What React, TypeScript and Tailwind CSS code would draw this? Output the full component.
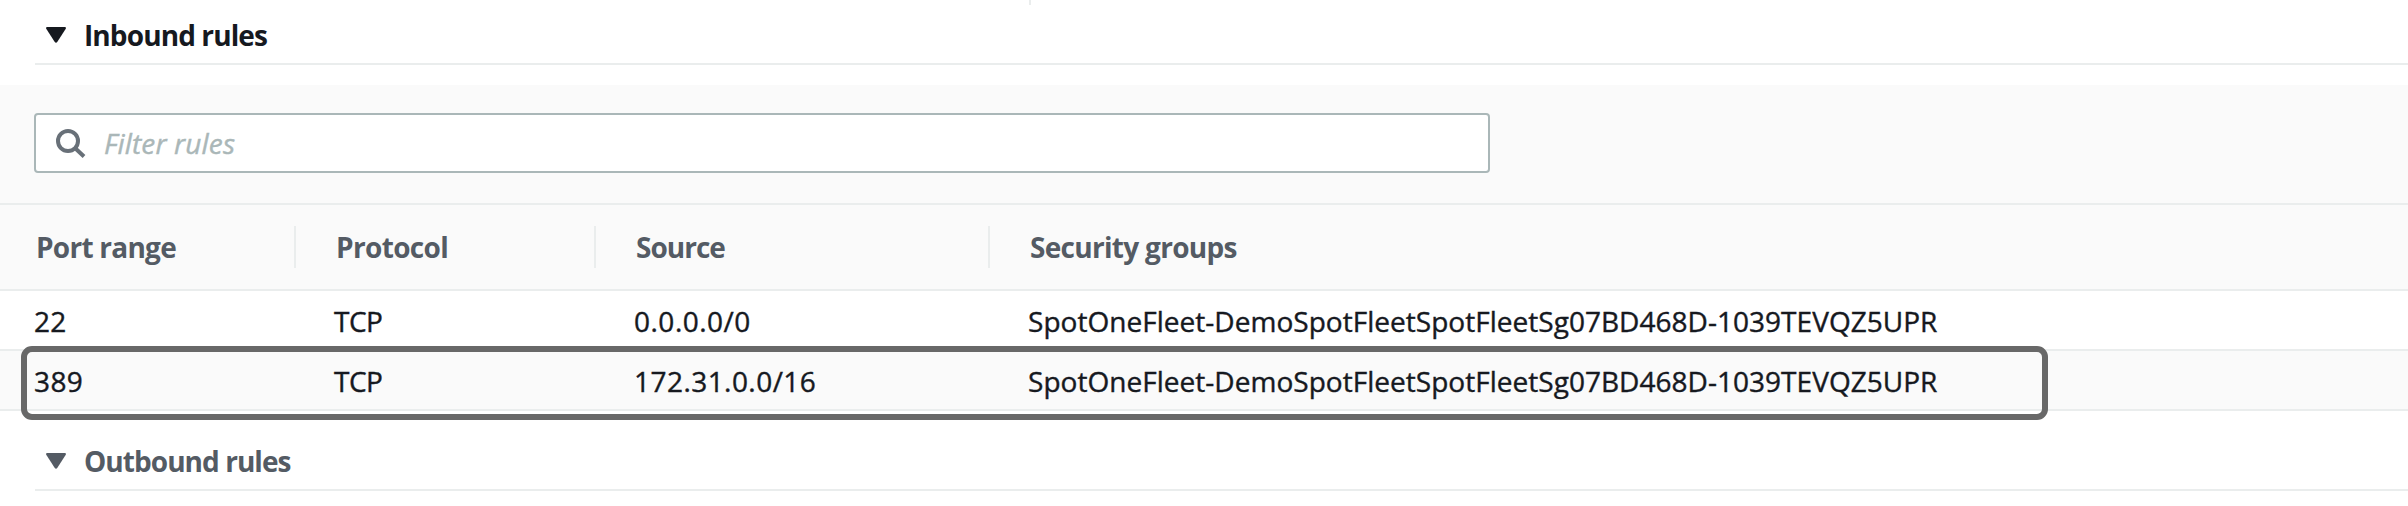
import React from "react";

const GROUP = "SpotOneFleet-DemoSpotFleetSpotFleetSg07BD468D-1039TEVQZ5UPR";

const GRID = "grid grid-cols-[296px_300px_394px_1fr]";

function Caret() {
  return (
    <svg className="h-4 w-5 shrink-0" viewBox="0 0 20 16" fill="currentColor">
      <path d="M1.2 0H18.8Q20.6 0.3 19.6 2L11.4 14.8Q10 16.8 8.6 14.8L0.4 2Q-0.6 0.3 1.2 0Z" />
    </svg>
  );
}

function SearchIcon() {
  return (
    <svg className="mt-px size-[30px] shrink-0 text-[#687078]" viewBox="0 0 30 30" fill="none" stroke="currentColor" strokeWidth="4">
      <circle cx="12" cy="12" r="10" />
      <path d="M19 19L28 27.5" />
    </svg>
  );
}

export default function App() {
  return (
    <main className="relative h-[506px] w-[2408px] overflow-hidden bg-white font-['Open_Sans','Noto_Sans',sans-serif] text-[28px] leading-[38px] whitespace-nowrap text-[#16191f]">
      <div className="absolute top-0 left-[1029px] h-[5px] w-[2px] bg-[#eaeded]" />

      <section>
        <h2 className="ml-[35px] flex h-[65px] items-center gap-[18px] border-b-2 border-[#eaeded] pt-[7px] pl-[11px] font-bold">
          <Caret />
          <span className="tracking-[-0.9px]">Inbound rules</span>
        </h2>

        <div className="mt-5 flex h-[120px] items-center border-b-2 border-[#eaeded] bg-[#fafafa] pr-[918px] pb-[2px] pl-[34px]">
          <label className="flex h-[60px] flex-1 items-center gap-[18px] rounded-[4px] border-2 border-[#aab7b8] bg-white pl-5">
            <SearchIcon />
            <span className="tracking-[0.15px] text-[#aab7b8] italic [-webkit-text-stroke:0.4px]">Filter rules</span>
          </label>
        </div>

        <div className={`${GRID} h-[86px] items-center border-b-2 border-[#eaeded] bg-[#fafafa] font-bold text-[#545b64]`}>
          <div className="flex h-[42px] items-center border-r-2 border-[#eaeded] pl-[36px] tracking-[-0.75px]">Port range</div>
          <div className="flex h-[42px] items-center border-r-2 border-[#eaeded] pl-[40px] tracking-[-0.65px]">Protocol</div>
          <div className="flex h-[42px] items-center border-r-2 border-[#eaeded] pl-[40px] tracking-[-1px]">Source</div>
          <div className="pl-[40px] tracking-[-0.7px]">Security groups</div>
        </div>

        <div className={`${GRID} h-[60px] items-center border-b-2 border-[#eaeded] pt-[2px] [-webkit-text-stroke:0.4px]`}>
          <div className="pl-[34px] tracking-[0.3px]">22</div>
          <div className="pl-[38px] tracking-[-0.5px]">TCP</div>
          <div className="pl-[38px] tracking-[0.5px]">0.0.0.0/0</div>
          <div className="pl-[38px] tracking-[0.03px]">{GROUP}</div>
        </div>
        <div className={`${GRID} h-[60px] items-center border-b-2 border-[#eaeded] bg-[#fafafa] pt-[2px] [-webkit-text-stroke:0.4px]`}>
          <div className="pl-[34px] tracking-[0.4px]">389</div>
          <div className="pl-[38px] tracking-[-0.5px]">TCP</div>
          <div className="pl-[38px] tracking-[0.45px]">172.31.0.0/16</div>
          <div className="pl-[38px] tracking-[0.03px]">{GROUP}</div>
        </div>
      </section>

      <section>
        <h2 className="ml-[35px] flex h-[80px] items-center gap-[18px] border-b-2 border-[#eaeded] pt-[22px] pl-[11px] font-bold text-[#545b64]">
          <Caret />
          <span className="tracking-[-0.95px]">Outbound rules</span>
        </h2>
      </section>

      <div className="absolute top-[346px] left-[20.5px] h-[74px] w-[2027.5px] rounded-[11px] border-6 border-[#686868]" />
    </main>
  );
}
